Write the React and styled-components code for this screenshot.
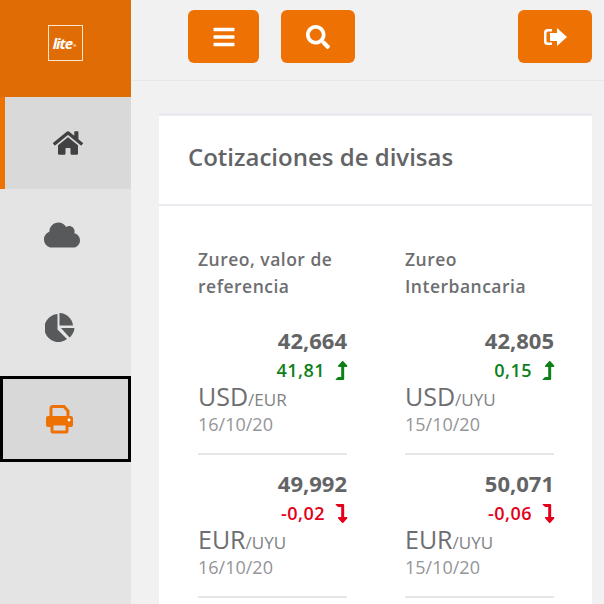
import React from 'react';
import styled, { createGlobalStyle } from 'styled-components';
import { FaHome, FaCloud, FaBars, FaSearch, FaLevelUpAlt, FaLevelDownAlt } from 'react-icons/fa';

const Global = createGlobalStyle`
  html, body { margin: 0; padding: 0; width: 604px; height: 604px; overflow: hidden; background: #f1f1f2; }
  * { box-sizing: border-box; }
  #root { font-family: "Open Sans", sans-serif; }
`;
const Page = styled.div`display: flex; width: 604px; height: 604px; overflow: hidden;`;
const Sidebar = styled.aside`width: 131px; flex: none; background: #e4e4e4; display: flex; flex-direction: column;`;
const Brand = styled.div`height: 97px; background: #e06c06; display: flex; align-items: center; justify-content: center; padding: 0 1px 12px 0;`;
const LogoBox = styled.div`
  width: 35px; height: 36px; border: 1.5px solid #fbe6cf; color: #fff; display: flex; align-items: center; justify-content: center;
  font: italic 700 15px "Open Sans", sans-serif; letter-spacing: -1px; padding-right: 1px;
  sup { font-size: 4px; line-height: 1; margin: 6px 0 0 1px; font-style: normal; letter-spacing: 0; }
`;
const NavItem = styled.div`
  height: 92px; display: flex; align-items: center; justify-content: center; font-size: 30px; color: #58595b;
  padding-right: ${p => p.$shift || 0}px;
  ${p => p.$active && `background: #d9d9d9; border-left: 5px solid #ee7203; color: #414042;`}
`;
const FocusItem = styled.div`
  height: 86px; margin: 3px 0; background: #d8d8d8; border: 3px solid #000; display: flex; align-items: center; justify-content: center; padding-right: 13px;
`;
const Main = styled.main`flex: 1; min-width: 0; display: flex; flex-direction: column;`;
const Topbar = styled.header`height: 81px; flex: none; padding: 10px 12px 0 57px; display: flex; gap: 22px; align-items: flex-start; border-bottom: 1px solid #e8e8e9;`;
const Btn = styled.button`
  width: ${p => p.$w}px; height: 53px; border: none; border-radius: 6px; background: #ee7203; color: #fff; font-size: 24px; padding: 0;
  display: flex; align-items: center; justify-content: center; ${p => p.$end && 'margin-left: auto;'}
`;
const Content = styled.div`flex: 1; padding: 32px 12px 0 28px; min-height: 0;`;
const Card = styled.section`background: #fff; border-top: 3px solid #e9ebee; height: 500px;`;
const CardHead = styled.div`height: 90px; padding: 0 29px 8px; display: flex; align-items: center; border-bottom: 2px solid #e9ebee;`;
const Title = styled.h2`margin: 0; font-size: 24px; font-weight: 600; color: #636466;`;
const Grid = styled.div`display: grid; grid-template-columns: 149px 149px; column-gap: 58px; padding: 40px 0 0 39px;`;
const Col = styled.div`display: flex; flex-direction: column;`;
const ColTitle = styled.h3`margin: 0 0 26px; height: 54px; font-size: 17.5px; line-height: 27px; font-weight: 600; color: #6d6e71; letter-spacing: 0.5px;`;
const Rate = styled.div`margin-bottom: 14px; border-bottom: 2px solid #e6e6e7; height: 129px;`;
const Value = styled.div`text-align: right; font-size: 22px; line-height: 28px; font-weight: 700; color: #636466;`;
const Change = styled.div`
  font-size: 18px; line-height: 29px; padding-top: 2px; font-weight: 600; color: ${p => p.$down ? '#e2001a' : '#0d8018'};
  display: flex; justify-content: flex-end; align-items: center; gap: 7px; letter-spacing: 0.5px;
  svg { font-size: 19px; margin-right: -4px; }
`;
const Pair = styled.div`font-size: 25px; line-height: 22px; color: #6d6e71; span { font-size: 17px; color: #808285; }`;
const DateText = styled.div`font-size: 18px; line-height: 26px; color: #939598;`;

const PieIcon = () => (
  <svg width="30" height="29" viewBox="0 0 30 29" fill="#58595b">
    <path d="M12.500 1A14 14 0 1 0 22 26L12.500 16.500z" />
    <path d="M14.500 0A14 14 0 0 1 28 12.500H14.500z" />
    <path d="M16 15h13.500A14 14 0 0 1 24.500 24.500z" />
  </svg>
);
const PrintIcon = () => (
  <svg width="29" height="29" viewBox="0 0 29 29" fill="none">
    <path d="M6 11V3.500a2 2 0 0 1 2-2h11l4 4.500v5" stroke="#ee7203" strokeWidth="3" />
    <path d="M3 11h23a2 2 0 0 1 2 2v7a2 2 0 0 1-2 2h-3v-4H6v4H3a2 2 0 0 1-2-2v-7a2 2 0 0 1 2-2z" fill="#ee7203" />
    <rect x="7" y="19" width="15" height="8" rx="1" stroke="#ee7203" strokeWidth="3" />
    <circle cx="24" cy="15" r="1.400" fill="#fff" />
  </svg>
);
const ExitIcon = () => (
  <svg width="24" height="20" viewBox="0 0 24 20" fill="#fff">
    <path d="M9 2H4.500A3.500 3.500 0 0 0 1 5.500v9A3.500 3.500 0 0 0 4.500 18H9v-2.500H5A1.500 1.500 0 0 1 3.500 14V6A1.500 1.500 0 0 1 5 4.500H9z" />
    <path d="M14 1l10 9-10 9v-5H7V6h7z" />
  </svg>
);

const columns = [
  { title: ['Zureo, valor de', 'referencia'], rates: [
    { v: '42,664', c: '41,81', p: 'USD', q: '/EUR', d: '16/10/20' },
    { v: '49,992', c: '-0,02', down: true, p: 'EUR', q: '/UYU', d: '16/10/20' },
  ]},
  { title: ['Zureo', 'Interbancaria'], rates: [
    { v: '42,805', c: '0,15', p: 'USD', q: '/UYU', d: '15/10/20' },
    { v: '50,071', c: '-0,06', down: true, p: 'EUR', q: '/UYU', d: '15/10/20' },
  ]},
];

export default function App() {
  return (
    <Page>
      <Global />
      <Sidebar>
        <Brand><LogoBox>lite<sup>®</sup></LogoBox></Brand>
        <NavItem $active><FaHome /></NavItem>
        <NavItem $shift={7}><FaCloud size={36} /></NavItem>
        <NavItem $shift={11}><PieIcon /></NavItem>
        <FocusItem><PrintIcon /></FocusItem>
      </Sidebar>
      <Main>
        <Topbar>
          <Btn $w={71}><FaBars /></Btn>
          <Btn $w={74}><FaSearch /></Btn>
          <Btn $w={74} $end><ExitIcon /></Btn>
        </Topbar>
        <Content>
          <Card>
            <CardHead><Title>Cotizaciones de divisas</Title></CardHead>
            <Grid>
              {columns.map(col => (
                <Col key={col.title[0]}>
                  <ColTitle>{col.title[0]}<br />{col.title[1]}</ColTitle>
                  {col.rates.map(r => (
                    <Rate key={r.v}>
                      <Value>{r.v}</Value>
                      <Change $down={r.down}>{r.c}{r.down ? <FaLevelDownAlt /> : <FaLevelUpAlt />}</Change>
                      <Pair>{r.p}<span>{r.q}</span></Pair>
                      <DateText>{r.d}</DateText>
                    </Rate>
                  ))}
                </Col>
              ))}
            </Grid>
          </Card>
        </Content>
      </Main>
    </Page>
  );
}
